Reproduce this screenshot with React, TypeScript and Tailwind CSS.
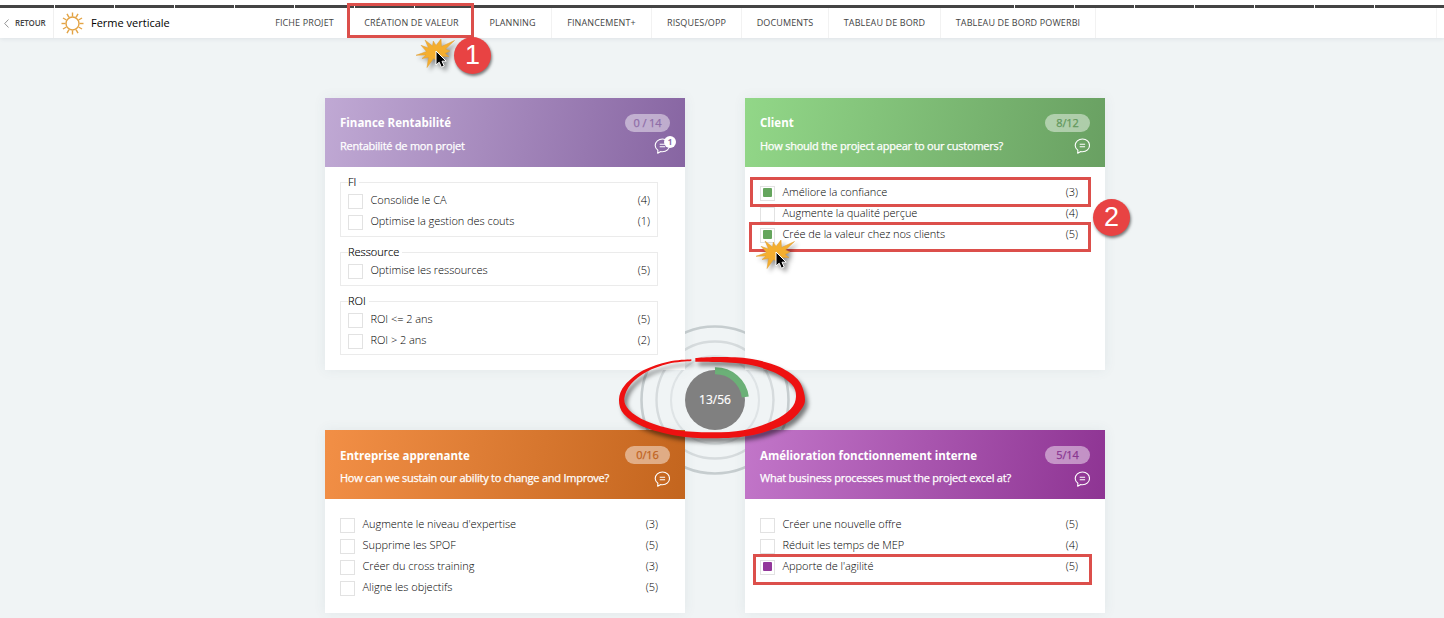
import type { ReactNode } from "react";

type Item = { label: string; value: number; checked?: boolean };
type Group = { legend: string; items: Item[] };

const TABS: [string, string][] = [
  ["FICHE PROJET", "w-[89px]"],
  ["CRÉATION DE VALEUR", "w-[125px]"],
  ["PLANNING", "w-[78px] border-r"],
  ["FINANCEMENT+", "w-[100px] border-r"],
  ["RISQUES/OPP", "w-[90px] border-r"],
  ["DOCUMENTS", "w-[87px] border-r"],
  ["TABLEAU DE BORD", "w-[112px] border-r"],
  ["TABLEAU DE BORD POWERBI", "w-[155px] border-r"],
];

const FINANCE: Group[] = [
  {
    legend: "FI",
    items: [
      { label: "Consolide le CA", value: 4 },
      { label: "Optimise la gestion des couts", value: 1 },
    ],
  },
  { legend: "Ressource", items: [{ label: "Optimise les ressources", value: 5 }] },
  {
    legend: "ROI",
    items: [
      { label: "ROI <= 2 ans", value: 5 },
      { label: "ROI > 2 ans", value: 2 },
    ],
  },
];

const CLIENT: Item[] = [
  { label: "Améliore la confiance", value: 3, checked: true },
  { label: "Augmente la qualité perçue", value: 4 },
  { label: "Crée de la valeur chez nos clients", value: 5, checked: true },
];

const LEARNING: Item[] = [
  { label: "Augmente le niveau d'expertise", value: 3 },
  { label: "Supprime les SPOF", value: 5 },
  { label: "Créer du cross training", value: 3 },
  { label: "Aligne les objectifs", value: 5 },
];

const INTERNAL: Item[] = [
  { label: "Créer une nouvelle offre", value: 5 },
  { label: "Réduit les temps de MEP", value: 4 },
  { label: "Apporte de l'agilité", value: 5, checked: true },
];

function Sun() {
  return (
    <svg className="h-6 w-6" viewBox="-12.5 -12.5 24 24" fill="none" stroke="#e3a344" strokeWidth="1.4">
      <circle r="6.5" />
      {Array.from({ length: 12 }, (_, i) => (
        <path key={i} d="M0 -7V-11" transform={`rotate(${i * 30})`} />
      ))}
    </svg>
  );
}

function CommentIcon() {
  return (
    <svg className="h-4 w-4" viewBox="-0.5 0 16 16" fill="none" stroke="#fff" strokeWidth="1.1" strokeLinejoin="round">
      <path d="M3.2 15.2L3.4 12.2C1.7 11.1 0.7 9.4 0.7 7.5C0.7 3.9 4 1 8 1S15 3.9 15 7.4S12 13.7 8 13.7C7.4 13.7 6.9 13.7 6.3 13.5Z" />
      <path d="M5.2 6.3H10.6M5.2 8.7H10.6" />
    </svg>
  );
}

function Row({ item, fill }: { item: Item; fill: string }) {
  return (
    <div className="flex h-[21px] items-start text-[11px] leading-[20px] font-light text-black">
      <span className="mt-1 mr-[7.5px] flex h-[15px] w-[15px] shrink-0 items-center justify-center border border-[#e2e2e2] bg-white">
        {item.checked && <span className={`mb-[2px] h-[9px] w-[9px] rounded-[1px] ${fill}`} />}
      </span>
      <span className="grow tracking-[-0.04px] whitespace-nowrap">{item.label}</span>
      <span>({item.value})</span>
    </div>
  );
}

type CardProps = {
  title: string;
  subtitle: string;
  score: string;
  gradient: string;
  scoreColor: string;
  badge?: string;
  low?: boolean;
  children: ReactNode;
};

function Card({ title, subtitle, score, gradient, scoreColor, badge, low, children }: CardProps) {
  return (
    <section className="flex flex-col bg-white shadow-[0_0_12px_rgba(70,90,100,0.08)]">
      <header className={`h-[69px] shrink-0 px-[15px] pt-4 text-white ${gradient}`}>
        <div className="flex h-[18px] items-center justify-between">
          <h2 className={`text-[11.5px] font-bold ${low ? "pt-[2px]" : ""}`}>{title}</h2>
          <span
            className={`flex h-[18px] w-[45px] items-center justify-center rounded-full bg-white/45 text-[11px] tracking-[-0.1px] [-webkit-text-stroke:0.25px_currentColor] ${scoreColor}`}
          >
            {score}
          </span>
        </div>
        <div className="mt-[6px] flex h-4 items-center justify-between">
          <p className="text-[11px] tracking-[-0.24px] whitespace-nowrap [-webkit-text-stroke:0.25px_currentColor]">
            {subtitle}
          </p>
          <span className={`relative ${low ? "pt-[2px]" : ""}`}>
            <CommentIcon />
            {badge && (
              <span className="absolute -top-[2px] -right-[6px] flex h-3 w-3 items-center justify-center rounded-full bg-white text-[8px] font-bold text-[#8c6ba6]">
                {badge}
              </span>
            )}
          </span>
        </div>
      </header>
      <div className="flex flex-col pt-[15px] pr-[27px] pl-[15px]">{children}</div>
    </section>
  );
}

function smooth(pts: number[][]) {
  let d = "";
  for (let i = 0; i < pts.length - 1; i++) {
    const a = pts[Math.max(0, i - 1)];
    const b = pts[i];
    const c = pts[i + 1];
    const e = pts[Math.min(pts.length - 1, i + 2)];
    d += `C${b[0] + (c[0] - a[0]) / 6} ${b[1] + (c[1] - a[1]) / 6} ${c[0] - (e[0] - b[0]) / 6} ${c[1] - (e[1] - b[1]) / 6} ${c[0]} ${c[1]}`;
  }
  return d;
}

const LEFT_OUTER = [
  [274, 148], [205, 155], [130, 181], [75, 225], [57, 268], [72, 313], [130, 350], [230, 377], [340, 385], [460, 375],
  [560, 339], [606, 295], [614, 258], [592, 207], [530, 167], [440, 145], [350, 141], [286, 144],
];
const INNER = [
  [286, 155], [350, 156], [440, 163], [520, 186], [575, 223], [588, 260], [572, 297], [520, 332], [430, 361],
  [330, 367], [230, 360], [140, 334], [87, 300], [73, 265], [93, 222], [140, 185], [205, 161], [274, 153],
];
const MARKER = `M274 148${smooth(LEFT_OUTER)}L286 155${smooth(INNER)}Z`;

function Rings() {
  return (
    <svg className="absolute top-[320px] left-[635px] h-[160px] w-[160px]" viewBox="-80 -80 160 160" fill="none">
      <circle r="44" stroke="#dfe4e6" strokeWidth="2" />
      <circle r="58.5" stroke="#d6dbdd" strokeWidth="2.4" />
      <circle r="73.5" stroke="#c6cdcf" strokeWidth="2.6" />
    </svg>
  );
}

function Score() {
  return (
    <div className="absolute top-[365px] left-[680px] flex h-[70px] w-[70px] items-center justify-center">
      <svg className="absolute inset-0 h-[70px] w-[70px]" viewBox="-35 -35 70 70" fill="none">
        <circle r="30" fill="#808080" />
        <path d="M0 -29.2A30 30 0 0 1 30.3 -3" stroke="#6bb077" strokeWidth="7" />
      </svg>
      <span className="relative text-[12px] text-white [-webkit-text-stroke:0.2px_currentColor]">13/56</span>
    </div>
  );
}

function Marker() {
  return (
    <svg
      className="absolute top-[310px] left-[600px] h-[180px] w-[230px] drop-shadow-[3px_4px_2px_rgba(0,0,0,0.5)]"
      viewBox="0 0 690 540"
    >
      <path d={MARKER} fill="#ee1111" />
    </svg>
  );
}

function Click({ place }: { place: string }) {
  return (
    <svg className={`absolute h-[40px] w-[48px] drop-shadow-[3px_3px_2px_rgba(0,0,0,0.4)] ${place}`} viewBox="-22 -14 48 40">
      <path
        d="M-20 4.3L-9.5 0.5L-15 -5.7L-7.5 -3L-11 -11L-3.5 -5L-2.7 -10L0 -5.5L5 -12L5.5 -4.5L18.5 -10.5L9.5 -2L14 0L9 2.5L13 5.5L6.5 5.5L2 10L-2.5 7.5L-9 16.5L-7.5 6.5L-14 7.5L-10 4Z"
        fill="#f4ae2f"
        stroke="#dc9d36"
        strokeWidth="0.5"
      />
      <path d="M0 0V14L3.2 11.2L5.4 16.2L8.2 15L6 10.2H10.2Z" fill="#000" stroke="#fff" strokeWidth="1" />
    </svg>
  );
}

function Step({ n, place }: { n: number; place: string }) {
  return (
    <span
      className={`absolute flex h-[37px] w-[37px] items-center justify-center rounded-full bg-[#e84343] font-['Liberation_Sans',sans-serif] text-[27px] leading-none text-white shadow-[1px_2px_3px_rgba(0,0,0,0.5)] ${place}`}
    >
      {n}
    </span>
  );
}

function Frame({ place }: { place: string }) {
  return <span className={`absolute border-[3px] border-[#dc4f4b] ${place}`} />;
}

export default function App() {
  return (
    <div className="relative h-[618px] w-[1444px] overflow-hidden bg-[#f0f4f5] font-['Open_Sans',sans-serif]">
      <div className="flex h-2 bg-white pt-[5px]">
        <span className="h-[3px] w-[54px] bg-[#444]" />
        {Array.from({ length: 7 }, (_, i) => (
          <span key={i} className="ml-px h-[3px] w-[59px] bg-[#444]" />
        ))}
        <span className="h-[3px] w-[540px] bg-[#444]" />
        {Array.from({ length: 6 }, (_, i) => (
          <span key={i} className="ml-px h-[3px] w-[59px] bg-[#444]" />
        ))}
        <span className="ml-px h-[3px] grow bg-[#444]" />
      </div>

      <nav className="flex h-[30px] items-stretch bg-white shadow-[0_1px_4px_rgba(70,80,110,0.1)]">
        <div className="flex w-[54px] items-center border-r border-[#f0f0f0] pl-1 text-[8px] font-semibold tracking-[-0.16px] text-[#444]">
          <svg className="mr-[6px] h-[9px] w-[5px]" viewBox="0 0 5 9" fill="none" stroke="#888" strokeWidth="0.9">
            <path d="M4.5 0.5L0.7 4.5L4.5 8.5" />
          </svg>
          RETOUR
        </div>
        <div className="flex w-[206px] items-center pl-[6px] text-[11px] text-black">
          <Sun />
          <span className="ml-[7px]">Ferme verticale</span>
        </div>
        {TABS.map(([label, box]) => (
          <a
            key={label}
            className={`flex shrink-0 items-center justify-center border-[#f2f2f2] text-[9px] tracking-[0.13px] whitespace-nowrap text-[#444] ${box}`}
          >
            {label}
          </a>
        ))}
        <span className="w-[341px] border-r border-[#f5f5f5]" />
      </nav>

      <Rings />

      <main className="relative ml-[325px] grid w-[780px] grid-cols-[360px_360px] grid-rows-[272px_183px] gap-[60px] pt-[60px]">
        <Card
          title="Finance Rentabilité"
          subtitle="Rentabilité de mon projet"
          score="0 / 14"
          gradient="bg-[linear-gradient(100deg,#c0a9d4,#8765a2)]"
          scoreColor="text-[#8f6da8]"
          badge="1"
        >
          <div className="flex flex-col gap-[15px]">
            {FINANCE.map((g) => (
              <div key={g.legend} className="border border-[#ebebeb] px-[7px] pb-1 last:pb-[3px]">
                <div className="-mt-[9px] h-4 w-fit bg-white pr-[3px] text-[11px] leading-4 font-light text-black [-webkit-text-stroke:0.15px_currentColor]">
                  {g.legend}
                </div>
                {g.items.map((it) => (
                  <Row key={it.label} item={it} fill="" />
                ))}
              </div>
            ))}
          </div>
        </Card>
        <Card
          title="Client"
          subtitle="How should the project appear to our customers?"
          score="8/12"
          gradient="bg-[linear-gradient(100deg,#92d788,#69a062)]"
          scoreColor="text-[#62985c]"
        >
          {CLIENT.map((it) => (
            <Row key={it.label} item={it} fill="bg-[#65a55d]" />
          ))}
        </Card>
        <Card
          low
          title="Entreprise apprenante"
          subtitle="How can we sustain our ability to change and Improve?"
          score="0/16"
          gradient="bg-[linear-gradient(100deg,#f28f46,#c3651e)]"
          scoreColor="text-[#c0631f]"
        >
          {LEARNING.map((it) => (
            <Row key={it.label} item={it} fill="" />
          ))}
        </Card>
        <Card
          low
          title="Amélioration fonctionnement interne"
          subtitle="What business processes must the project excel at?"
          score="5/14"
          gradient="bg-[linear-gradient(100deg,#c276c9,#8e3493)]"
          scoreColor="text-[#8a3691]"
        >
          {INTERNAL.map((it) => (
            <Row key={it.label} item={it} fill="bg-[#92379a]" />
          ))}
        </Card>
      </main>

      <Score />
      <Marker />
      <Frame place="top-[3px] left-[347px] h-[35px] w-[127px]" />
      <Frame place="top-[177px] left-[750px] h-[30px] w-[341px]" />
      <Frame place="top-[222px] left-[749px] h-[30px] w-[342px]" />
      <Frame place="top-[554px] left-[753px] h-[31px] w-[339px]" />
      <Click place="top-[37px] left-[414px]" />
      <Click place="top-[238px] left-[754px]" />
      <Step n={1} place="top-[37px] left-[454px]" />
      <Step n={2} place="top-[199px] left-[1093px]" />
    </div>
  );
}
